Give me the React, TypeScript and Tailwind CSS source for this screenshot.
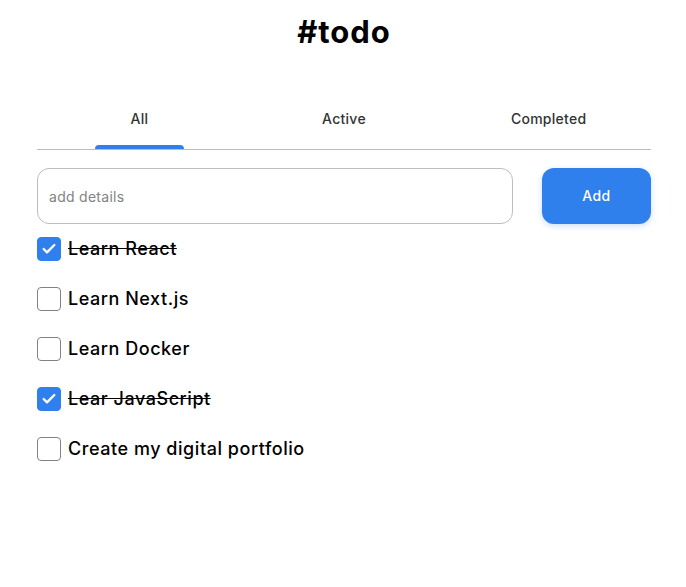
import { Check } from "lucide-react";

const todos = [
  { text: "Learn React", done: true },
  { text: "Learn Next.js", done: false },
  { text: "Learn Docker", done: false },
  { text: "Lear JavaScript", done: true },
  { text: "Create my digital portfolio", done: false },
];

const tabs = ["All", "Active", "Completed"];

export default function App() {
  return (
    <div className="min-h-screen bg-white font-['Inter',sans-serif] text-[#333]">
      <div className="mx-auto w-[614px] translate-x-px pt-[14px]">
        <h1 className="text-center text-[31px] font-bold leading-9 text-black tracking-[0.03em]">
          #todo
        </h1>
        <div className="mt-[60px] flex border-b border-[#bdbdbd]">
          {tabs.map((t, i) => (
            <div key={t} className="flex flex-1 flex-col items-center">
              <span className="text-sm font-medium leading-[18px] tracking-[0.02em]">{t}</span>
              <div
                className={
                  i === 0
                    ? "mt-[17px] h-1 w-[89px] rounded-t bg-[#2f80ed]"
                    : "mt-[17px] h-1 w-[89px]"
                }
              />
            </div>
          ))}
        </div>
        <div className="mt-[18px] flex gap-[29px]">
          <input
            className="h-[56px] flex-1 rounded-xl border border-[#bdbdbd] px-[11px] text-sm tracking-[0.02em] outline-none placeholder:text-[#828282]"
            placeholder="add details"
          />
          <button className="h-[56px] w-[109px] rounded-xl bg-[#2f80ed] text-sm font-medium tracking-[0.03em] text-white shadow-[0_2px_6px_rgba(127,177,243,0.4)]">
            Add
          </button>
        </div>
        <ul className="mt-[13px] flex flex-col gap-[26px]">
          {todos.map((todo) => (
            <li key={todo.text} className="flex items-center gap-[7px]">
              {todo.done ? (
                <span className="flex size-6 items-center justify-center rounded border border-[#2f80ed] bg-[#2f80ed]">
                  <Check className="size-4 text-white" strokeWidth={3.5} />
                </span>
              ) : (
                <span className="size-6 rounded border border-[#828282] bg-white" />
              )}
              <span
                className={
                  todo.done
                    ? "text-lg font-medium leading-6 tracking-[0.03em] text-black line-through"
                    : "text-lg font-medium leading-6 tracking-[0.03em] text-black"
                }
              >
                {todo.text}
              </span>
            </li>
          ))}
        </ul>
      </div>
    </div>
  );
}
